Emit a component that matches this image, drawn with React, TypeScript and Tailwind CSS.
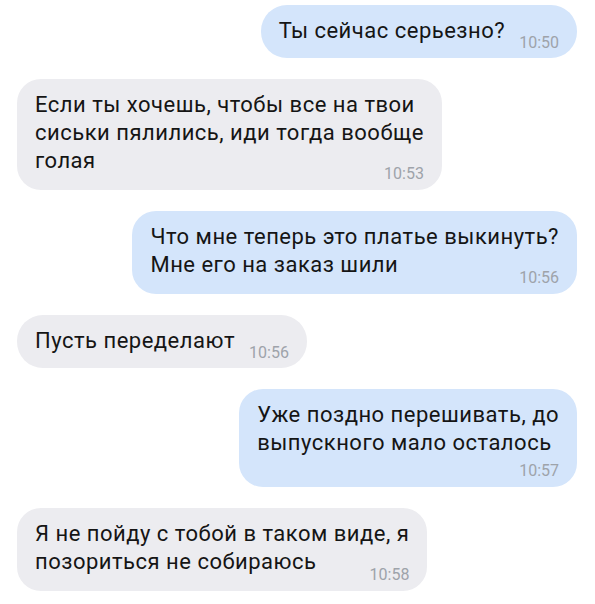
type Msg = {
  out: boolean
  lines: string[]
  time: string
  // 'inline' = time next to single line, 'float' = beside last line, 'below' = own row
  timeMode: 'inline' | 'float' | 'below'
}

const messages: Msg[] = [
  { out: true, lines: ['Ты сейчас серьезно?'], time: '10:50', timeMode: 'inline' },
  {
    out: false,
    lines: ['Если ты хочешь, чтобы все на твои', 'сиськи пялились, иди тогда вообще', 'голая'],
    time: '10:53',
    timeMode: 'float',
  },
  {
    out: true,
    lines: ['Что мне теперь это платье выкинуть?', 'Мне его на заказ шили'],
    time: '10:56',
    timeMode: 'float',
  },
  { out: false, lines: ['Пусть переделают'], time: '10:56', timeMode: 'inline' },
  {
    out: true,
    lines: ['Уже поздно перешивать, до', 'выпускного мало осталось'],
    time: '10:57',
    timeMode: 'below',
  },
  {
    out: false,
    lines: ['Я не пойду с тобой в таком виде, я', 'позориться не собираюсь'],
    time: '10:58',
    timeMode: 'float',
  },
]

const timeCls = 'text-[16px] leading-5 text-[#9ea3aa]'
const textCls = 'text-[22px] leading-7 tracking-[0.5px]'

function Bubble({ msg }: { msg: Msg }) {
  const bg = msg.out ? 'bg-[#d4e5fb] self-end' : 'bg-[#ececf0] self-start'

  if (msg.timeMode === 'inline') {
    return (
      <div className={`${bg} flex items-start rounded-[26px] px-[18px] pt-3 pb-[5px]`}>
        <p className={textCls}>{msg.lines[0]}</p>
        <div className={`${timeCls} ml-[14px] mt-4`}>{msg.time}</div>
      </div>
    )
  }

  return (
    <div className={`${bg} flex flex-col rounded-3xl px-[18px] pt-3 pb-[6px]`}>
      <p className={textCls}>
        {msg.lines.map((l, i) => (
          <span key={i} className="block">
            {l}
          </span>
        ))}
      </p>
      <div className={`${timeCls} self-end ${msg.timeMode === 'float' ? '-mt-[11px]' : 'mt-[4px]'}`}>
        {msg.time}
      </div>
    </div>
  )
}

export default function App() {
  return (
    <div
      className="flex min-h-[604px] w-[595px] flex-col gap-[21px] bg-white pt-[5px] pr-[18px] pl-[17px] text-[#151515]"
      style={{ fontFamily: 'Roboto, "Noto Sans", sans-serif' }}
    >
      {messages.map((m, i) => (
        <Bubble key={i} msg={m} />
      ))}
    </div>
  )
}
